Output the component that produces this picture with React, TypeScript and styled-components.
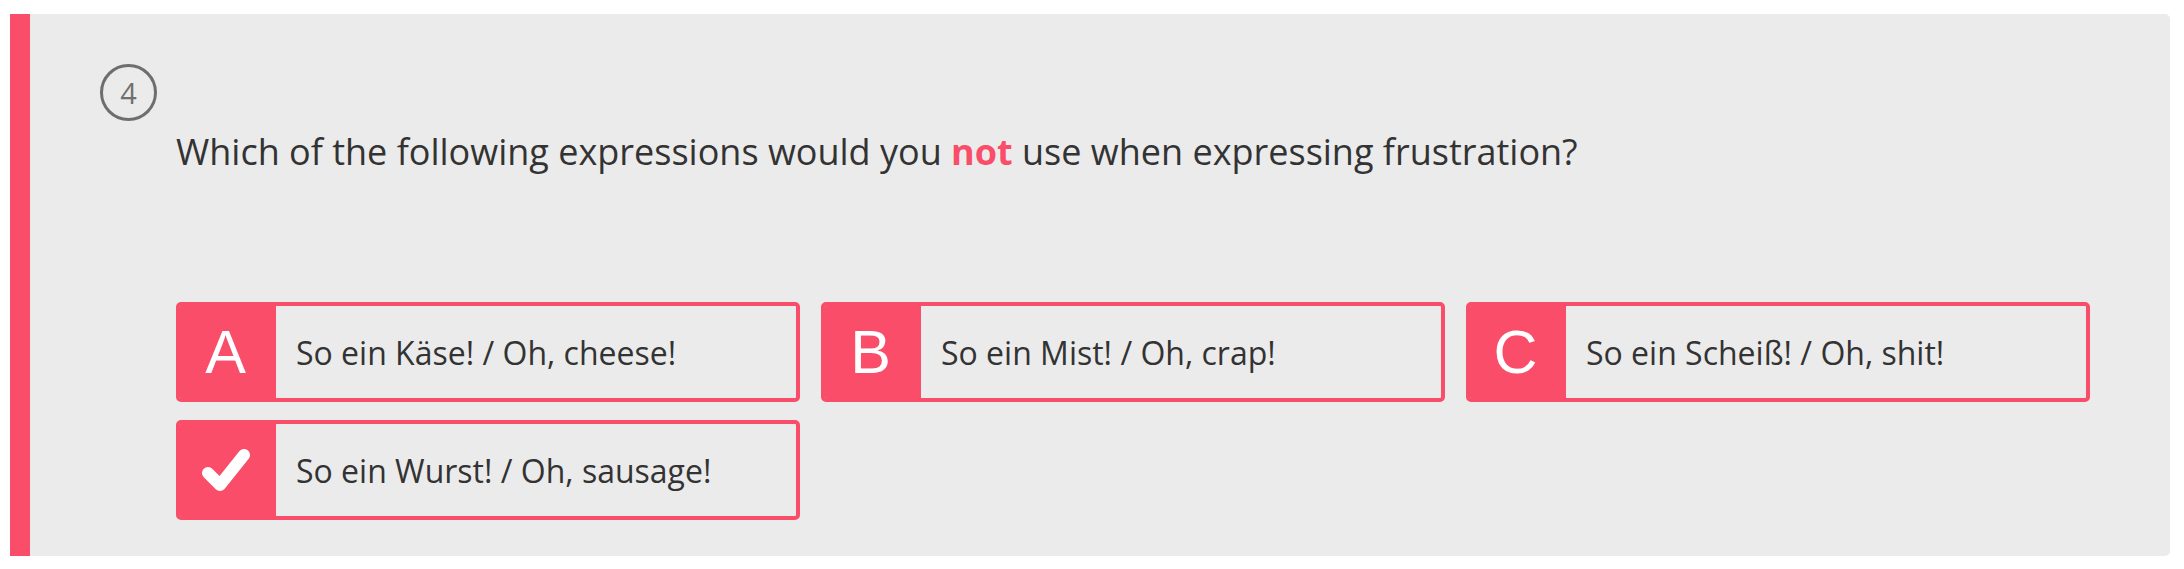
import React from "react";
import styled, { createGlobalStyle } from "styled-components";

const PINK = "#f94d6a";

const Global = createGlobalStyle`
  html, body { margin: 0; padding: 0; background: #ffffff; }
  body { font-family: "Open Sans", "Liberation Sans", sans-serif; }
`;

const Page = styled.div`
  padding: 14px 14px 13px 10px;
`;

const Panel = styled.section`
  background: #ebebeb;
  border-left: 20px solid ${PINK};
  border-radius: 0 5px 5px 0;
  padding: 50px 80px 36px 70px;
`;

const Number = styled.div`
  width: 51px;
  height: 51px;
  border: 3px solid #6e6e6e;
  border-radius: 50%;
  display: flex;
  align-items: center;
  justify-content: center;
  font-family: "Open Sans", sans-serif;
  font-size: 29px;
  color: #707070;
  line-height: 1;
`;

const Body = styled.div`
  margin-left: 76px;
`;

const Question = styled.p`
  margin: 6px 0 0 0;
  font-family: "Open Sans", sans-serif;
  font-size: 36px;
  line-height: 50px;
  color: #333333;
`;

const Not = styled.strong`
  color: ${PINK};
  font-weight: 700;
`;

const Options = styled.div`
  margin-top: 125px;
  display: grid;
  grid-template-columns: repeat(3, 624px);
  column-gap: 21px;
  row-gap: 18px;
`;

const Option = styled.div`
  display: flex;
  align-items: stretch;
  height: 100px;
  box-sizing: border-box;
  border: 4px solid ${PINK};
  border-radius: 5px;
  overflow: hidden;
`;

const Badge = styled.div`
  flex: 0 0 96px;
  box-sizing: border-box;
  padding-right: 5px;
  background: ${PINK};
  display: flex;
  align-items: center;
  justify-content: center;
  color: #ffffff;
  font-family: "Liberation Sans", Arial, sans-serif;
  font-size: 61px;
  line-height: 1;
`;

const Label = styled.div`
  display: flex;
  align-items: center;
  padding-left: 20px;
  font-family: "Open Sans", sans-serif;
  font-size: 32px;
  color: #333333;
`;

const Check = () => (
  <svg width="50" height="44" viewBox="0 0 50 44" aria-hidden="true">
    <polyline
      points="7,25 19,37 43,7"
      fill="none"
      stroke="#ffffff"
      strokeWidth="12"
      strokeLinecap="round"
      strokeLinejoin="round"
    />
  </svg>
);

const answers: { key: string; text: string; checked?: boolean }[] = [
  { key: "A", text: "So ein Käse! / Oh, cheese!" },
  { key: "B", text: "So ein Mist! / Oh, crap!" },
  { key: "C", text: "So ein Scheiß! / Oh, shit!" },
  { key: "D", text: "So ein Wurst! / Oh, sausage!", checked: true },
];

export default function App() {
  return (
    <Page>
      <Global />
      <Panel>
        <Number>4</Number>
        <Body>
          <Question>
            Which of the following expressions would you <Not>not</Not> use when
            expressing frustration?
          </Question>
          <Options>
            {answers.map((a) => (
              <Option key={a.key}>
                <Badge>{a.checked ? <Check /> : a.key}</Badge>
                <Label>{a.text}</Label>
              </Option>
            ))}
          </Options>
        </Body>
      </Panel>
    </Page>
  );
}
